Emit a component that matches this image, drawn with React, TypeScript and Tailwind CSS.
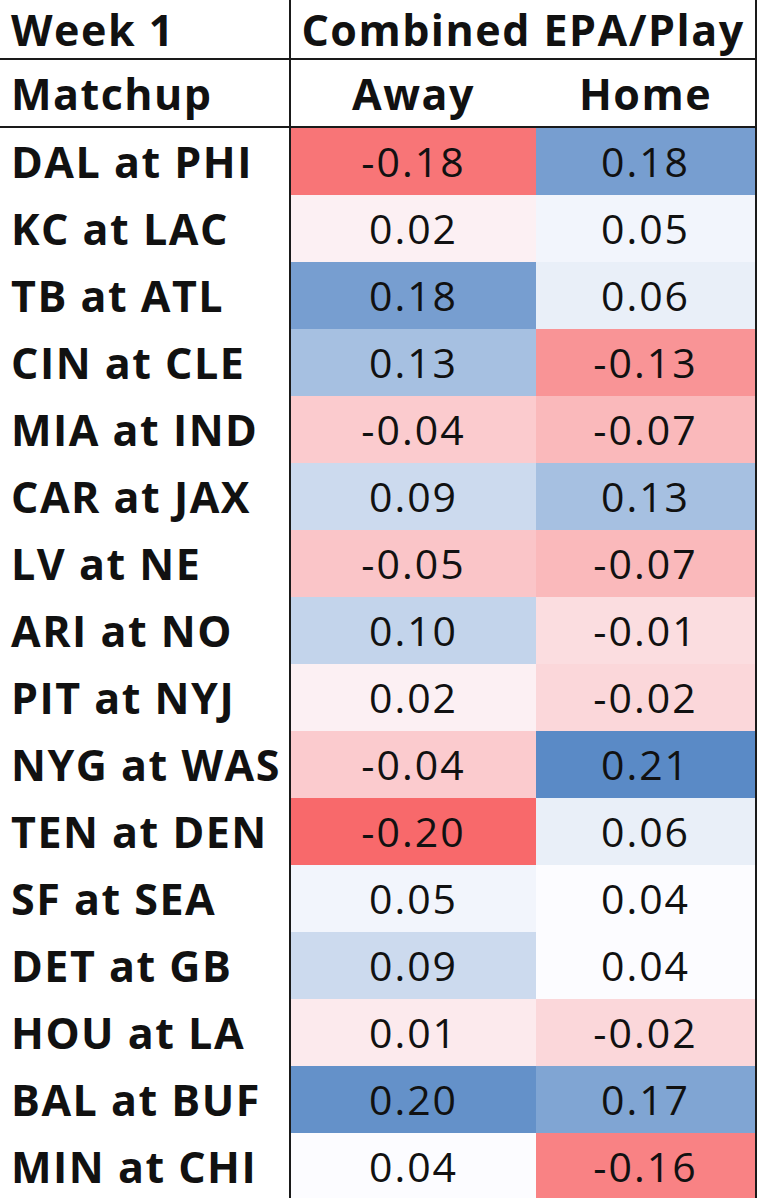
const rows = [
  { m: 'DAL at PHI', a: '-0.18', ab: 'bg-[#F87577]', h: '0.18', hb: 'bg-[#779ED0]' },
  { m: 'KC at LAC', a: '0.02', ab: 'bg-[#FCF0F3]', h: '0.05', hb: 'bg-[#F2F5FC]' },
  { m: 'TB at ATL', a: '0.18', ab: 'bg-[#779ED0]', h: '0.06', hb: 'bg-[#E9EFF8]' },
  { m: 'CIN at CLE', a: '0.13', ab: 'bg-[#A6C0E1]', h: '-0.13', hb: 'bg-[#F99496]' },
  { m: 'MIA at IND', a: '-0.04', ab: 'bg-[#FBCBCE]', h: '-0.07', hb: 'bg-[#FAB9BB]' },
  { m: 'CAR at JAX', a: '0.09', ab: 'bg-[#CCDAEE]', h: '0.13', hb: 'bg-[#A6C0E1]' },
  { m: 'LV at NE', a: '-0.05', ab: 'bg-[#FAC5C8]', h: '-0.07', hb: 'bg-[#FAB9BB]' },
  { m: 'ARI at NO', a: '0.10', ab: 'bg-[#C3D4EB]', h: '-0.01', hb: 'bg-[#FBDDE0]' },
  { m: 'PIT at NYJ', a: '0.02', ab: 'bg-[#FCF0F3]', h: '-0.02', hb: 'bg-[#FBD7DA]' },
  { m: 'NYG at WAS', a: '-0.04', ab: 'bg-[#FBCBCE]', h: '0.21', hb: 'bg-[#5A8AC6]' },
  { m: 'TEN at DEN', a: '-0.20', ab: 'bg-[#F8696B]', h: '0.06', hb: 'bg-[#E9EFF8]' },
  { m: 'SF at SEA', a: '0.05', ab: 'bg-[#F2F5FC]', h: '0.04', hb: 'bg-[#FCFCFF]' },
  { m: 'DET at GB', a: '0.09', ab: 'bg-[#CCDAEE]', h: '0.04', hb: 'bg-[#FCFCFF]' },
  { m: 'HOU at LA', a: '0.01', ab: 'bg-[#FCEAED]', h: '-0.02', hb: 'bg-[#FBD7DA]' },
  { m: 'BAL at BUF', a: '0.20', ab: 'bg-[#6491C9]', h: '0.17', hb: 'bg-[#80A5D3]' },
  { m: 'MIN at CHI', a: '0.04', ab: 'bg-[#FCFCFF]', h: '-0.16', hb: 'bg-[#F98284]' },
];

const label = 'text-[43px] font-bold leading-none tracking-[1.5px]';
const num = 'text-[41px] leading-none tracking-[2px]';

export default function App() {
  return (
    <div className="min-h-screen bg-white font-['Open_Sans',sans-serif] text-[#111]">
      <div className="w-[757px] border-r-2 border-[#1a1a1a]">
        {/* header rows */}
        <div className="flex h-[60px] border-b-2 border-[#1a1a1a]">
          <div className={`w-[291px] border-r-2 border-[#1a1a1a] pl-[11px] flex items-center ${label}`}>
            Week 1
          </div>
          <div className={`flex-1 flex items-center justify-center ${label}`}>
            Combined EPA/Play
          </div>
        </div>
        <div className="flex h-[68px] border-b-2 border-[#1a1a1a]">
          <div className={`w-[291px] border-r-2 border-[#1a1a1a] pl-[11px] flex items-center ${label}`}>
            Matchup
          </div>
          <div className={`w-[245px] flex items-center justify-center ${label}`}>Away</div>
          <div className={`flex-1 flex items-center justify-center ${label}`}>Home</div>
        </div>

        {rows.map((r) => (
          <div key={r.m} className="flex h-[67px]">
            <div className={`w-[291px] border-r-2 border-[#1a1a1a] pl-[11px] flex items-center ${label}`}>
              {r.m}
            </div>
            <div className={`w-[245px] flex items-center justify-center ${num} ${r.ab}`}>{r.a}</div>
            <div className={`flex-1 flex items-center justify-center ${num} ${r.hb}`}>{r.h}</div>
          </div>
        ))}
      </div>
    </div>
  );
}
